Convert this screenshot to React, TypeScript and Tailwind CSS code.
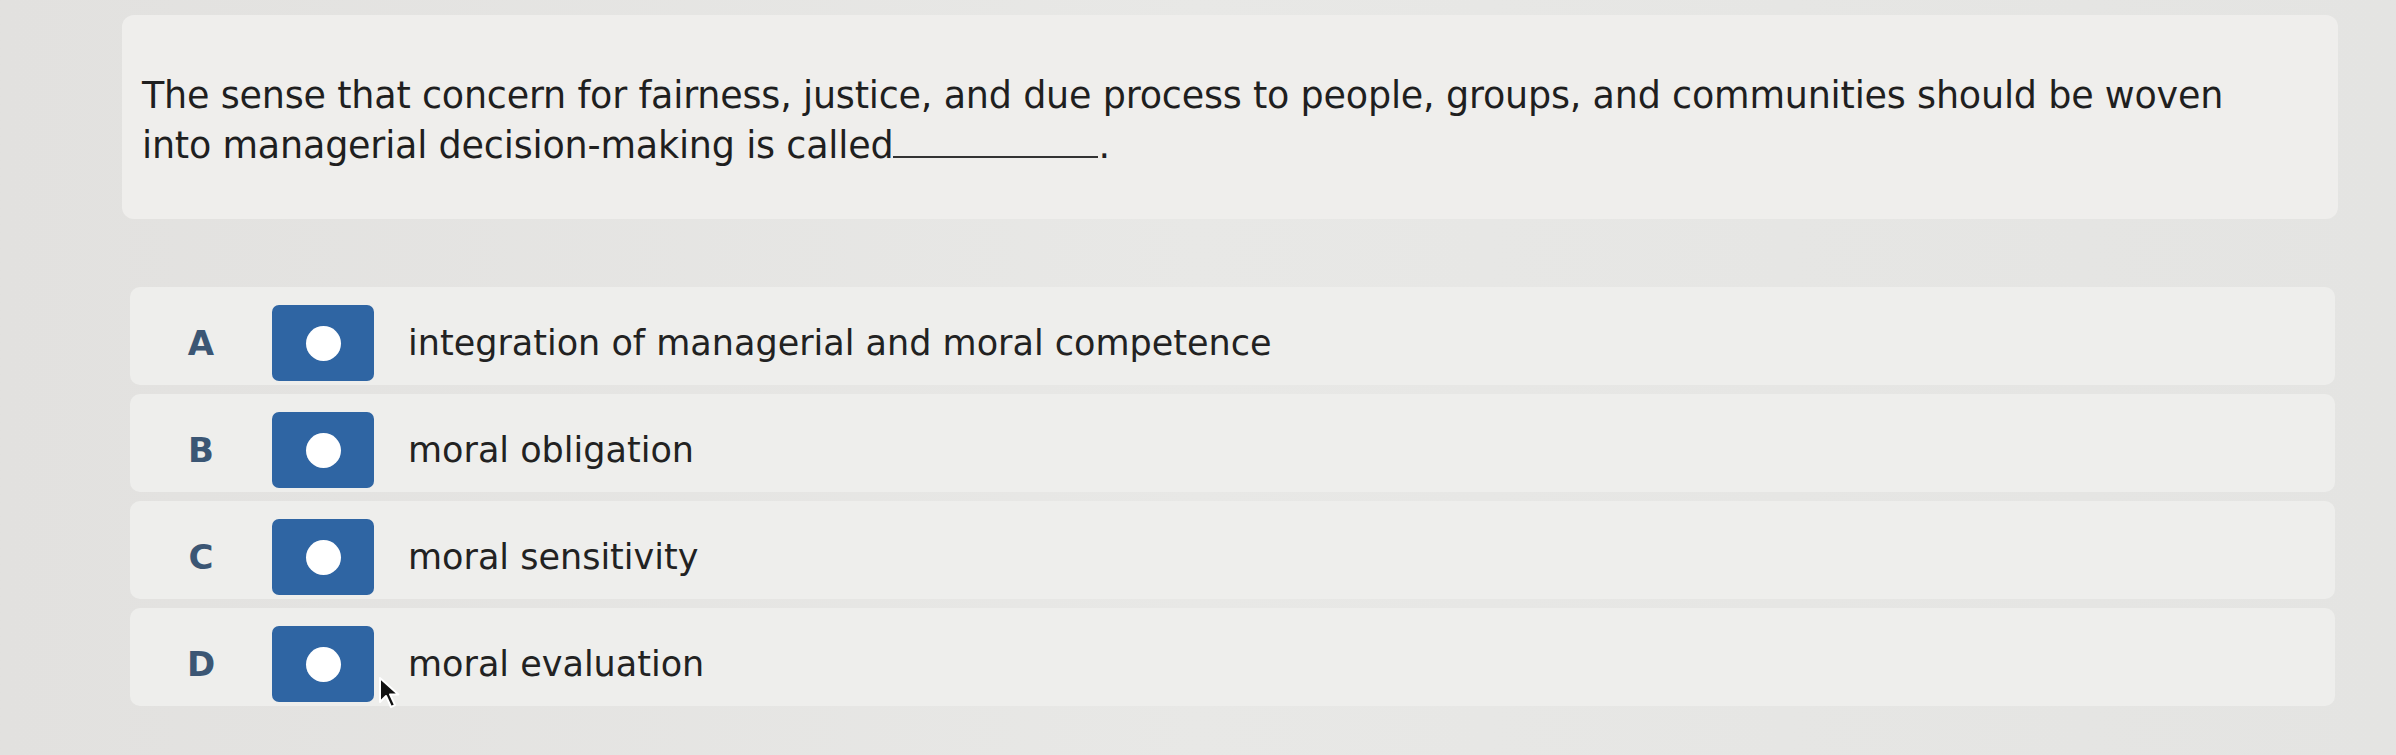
const options = [
  { letter: 'A', text: 'integration of managerial and moral competence' },
  { letter: 'B', text: 'moral obligation' },
  { letter: 'C', text: 'moral sensitivity' },
  { letter: 'D', text: 'moral evaluation' },
];

function RadioBox() {
  return (
    <div className="flex h-[76px] w-[102px] shrink-0 items-center justify-center rounded-[7px] bg-[#2f65a3]">
      <div className="h-[35px] w-[35px] rounded-full bg-white" />
    </div>
  );
}

export default function App() {
  return (
    <div className="min-h-[755px] w-[2396px] bg-gradient-to-r from-[#e2e1df] via-[#e8e8e6] to-[#e4e4e2] font-['DejaVu_Sans',sans-serif] text-[#1f1f1f]">
      <div className="pl-[122px] pt-[15px] w-[2338px]">
        {/* Question */}
        <div className="h-[204px] rounded-[12px] bg-[#efeeec] pl-[20px] pt-[56px]">
          <p className="text-[36.5px] leading-[50px] tracking-[-0.2px]">
            The sense that concern for fairness, justice, and due process to people, groups, and communities should be woven
            <br />
            into managerial decision-making is called
            <span className="inline-block w-[205px] border-b-2 border-[#333]" />
            .
          </p>
        </div>

        {/* Options */}
        <div className="mt-[68px] ml-[8px] flex flex-col gap-[9px] pr-[3px]">
          {options.map((o, i) => (
            <div
              key={o.letter}
              className="relative flex h-[98px] items-center rounded-[10px] bg-[#eeeeec] pt-[14px]"
            >
              <div className="w-[142px] text-center text-[34px] font-bold text-[#3b5674]">{o.letter}</div>
              <RadioBox />
              <div className="ml-[34px] text-[35px] text-[#222]">{o.text}</div>
              {i === 3 && (
                <svg
                  className="absolute left-[248px] top-[68px]"
                  width="24"
                  height="34"
                  viewBox="0 0 12 17"
                >
                  <path d="M1 1 L1 13 L4 10 L6.5 15.5 L8.5 14.6 L6 9.2 L10.2 9.2 Z" fill="#111" stroke="#fff" strokeWidth="1" strokeLinejoin="round" />
                </svg>
              )}
            </div>
          ))}
        </div>
      </div>
    </div>
  );
}
